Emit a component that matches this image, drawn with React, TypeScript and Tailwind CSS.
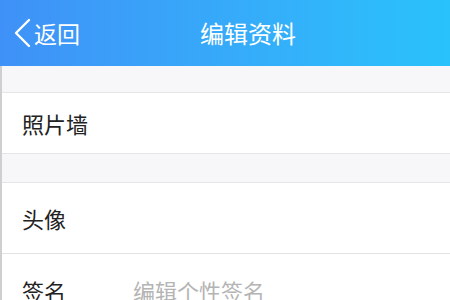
export default function App() {
    return (
        <div
            className="w-[450px] h-[300px] overflow-hidden bg-white"
            style={{ fontFamily: '"Noto Sans CJK SC", "Noto Sans", sans-serif' }}
        >
            {/* Header */}
            <div className="relative flex h-[66px] items-center bg-gradient-to-r from-[#3f91f7] to-[#29c2fb] text-white">
                <div className="flex items-center pl-[12px]">
                    <svg width="20" height="32" viewBox="0 0 20 32" fill="none">
                        <path d="M17 3 L4 16 L17 29" stroke="white" strokeWidth="2.4" strokeLinecap="round" strokeLinejoin="round" />
                    </svg>
                    <span className="ml-[2px] text-[23px] leading-none">返回</span>
                </div>
                <div className="absolute left-[200px] top-0 flex h-full items-center text-[24px] leading-none">
                    编辑资料
                </div>
            </div>

            <div className="border-l-2 border-[#cfcfcf]">
                <div className="h-[27px] bg-[#f7f7f9] border-b border-[#e6e6e8]" />
                <div className="flex h-[60px] items-center pl-[20px] text-[22px] text-[#222]">照片墙</div>
                <div className="h-[30px] bg-[#f7f7f9] border-y border-[#e6e6e8]" />
                <div className="flex h-[71px] items-center pl-[20px] text-[22px] text-[#222] border-b border-[#e2e2e2]">头像</div>
                <div className="flex h-[72px] items-center pl-[20px] text-[22px] text-[#222]">
                    <span className="w-[111px]">签名</span>
                    <span className="text-[#b4b4b4]">编辑个性签名</span>
                </div>
            </div>
        </div>
    );
}
